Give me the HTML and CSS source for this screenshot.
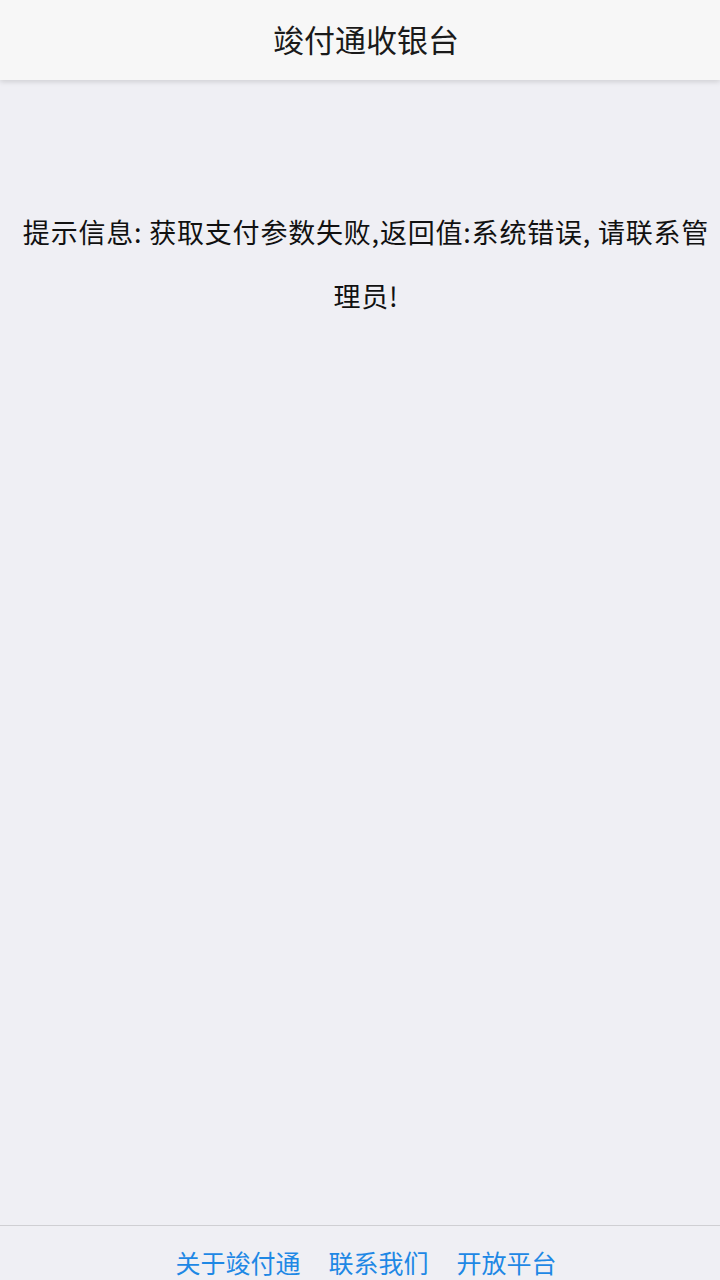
FILE: index.html
```html
<!DOCTYPE html>
<html lang="zh-CN">
<head>
<meta charset="utf-8">
<meta name="viewport" content="width=720">
<title>竣付通收银台</title>
<link rel="stylesheet" href="styles.css">
</head>
<body>
<div class="page">
  <header class="topbar">
    <h1 class="title">竣付通收银台</h1>
  </header>
  <main class="content">
    <p class="message">提示信息: 获取支付参数失败,返回值:系统错误, 请联系管理员!</p>
  </main>
  <footer class="footer">
    <a class="footer-link" href="#">关于竣付通</a>
    <a class="footer-link" href="#">联系我们</a>
    <a class="footer-link" href="#">开放平台</a>
  </footer>
</div>
</body>
</html>
```
FILE: styles.css
```css
html, body {
  margin: 0;
  padding: 0;
  height: 100%;
}
body {
  background: #efeff4;
  font-family: "Noto Sans CJK SC", "Noto Sans", sans-serif;
  color: #111;
}
.page {
  display: flex;
  flex-direction: column;
  height: 1280px;
  overflow: hidden;
}
.topbar {
  height: 80px;
  background: #f7f7f7;
  box-shadow: 0 2px 5px rgba(0, 0, 0, 0.13);
  display: flex;
  align-items: center;
  justify-content: center;
  padding-left: 12px;
  position: relative;
  z-index: 1;
}
.title {
  margin: 0 0 3px;
  font-size: 31px;
  font-weight: normal;
  color: #1a1a1a;
  line-height: 40px;
}
.content {
  flex: 1;
  padding: 120px 6px 0 18px;
}
.message {
  margin: 0;
  text-align: center;
  font-size: 27px;
  letter-spacing: 0.8px;
  line-height: 64px;
  color: #111;
}
.footer {
  height: 55px;
  box-sizing: border-box;
  border-top: 1px solid #cfcfd3;
  display: flex;
  justify-content: center;
  gap: 28px;
  padding: 21px 0 0 12px;
}
.footer-link {
  font-size: 25px;
  line-height: 30px;
  color: #1e88e5;
  text-decoration: none;
}
```
